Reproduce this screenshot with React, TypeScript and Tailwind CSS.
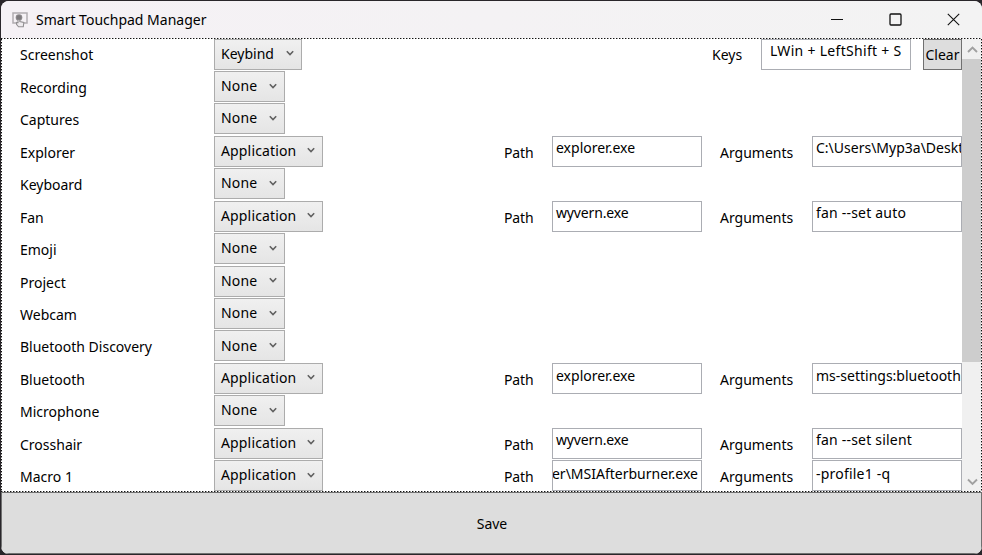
import React from "react";

type Row = { name: string; kind: "Keybind" | "None" | "Application"; path?: string; args?: string; end?: boolean };

const rows: Row[] = [
  { name: "Screenshot", kind: "Keybind" },
  { name: "Recording", kind: "None" },
  { name: "Captures", kind: "None" },
  { name: "Explorer", kind: "Application", path: "explorer.exe", args: "C:\\Users\\Myp3a\\Deskt" },
  { name: "Keyboard", kind: "None" },
  { name: "Fan", kind: "Application", path: "wyvern.exe", args: "fan --set auto" },
  { name: "Emoji", kind: "None" },
  { name: "Project", kind: "None" },
  { name: "Webcam", kind: "None" },
  { name: "Bluetooth Discovery", kind: "None" },
  { name: "Bluetooth", kind: "Application", path: "explorer.exe", args: "ms-settings:bluetooth" },
  { name: "Microphone", kind: "None" },
  { name: "Crosshair", kind: "Application", path: "wyvern.exe", args: "fan --set silent" },
  { name: "Macro 1", kind: "Application", path: "er\\MSIAfterburner.exe", args: "-profile1 -q", end: true },
];

const comboWidth = { Keybind: "w-[88px]", None: "w-[71px]", Application: "w-[109px]" };

function Combo({ kind }: { kind: Row["kind"] }) {
  return (
    <div className={`${comboWidth[kind]} flex h-[31px] items-center justify-between border border-[#acacac] bg-linear-to-b from-[#f0f0f0] to-[#e5e5e5] pr-[7px] pb-[1.8px] pl-[6px]`}>
      <span className={kind === "Keybind" ? "" : "tracking-[0.15px]"}>{kind}</span>
      <svg width="8" height="7" viewBox="0 0 8 7" className="mt-px shrink-0">
        <path d="M.8 1.3 L4 4.5 L7.2 1.3" fill="none" stroke="#606060" strokeWidth="1.6" />
      </svg>
    </div>
  );
}

function Field({ text, end, spacing, top }: { text: string; end?: boolean; spacing: string; top: string }) {
  return (
    <div className={`flex h-[31px] w-[150px] shrink-0 overflow-hidden border border-[#abadb3] bg-white ${top} ${end ? "justify-end pr-[3px]" : "pl-[3px]"}`}>
      <span className={`leading-[20px] ${spacing}`}>{text}</span>
    </div>
  );
}

function ActionRow({ row }: { row: Row }) {
  const label = row.kind === "Keybind" ? "pt-[6px]" : "pt-[7px]";
  const top = row.end ? "pt-[2.4px]" : row.name === "Bluetooth" ? "pt-[2px]" : "pt-px";
  const argSpacing = row.args?.startsWith("fan") || row.end ? "tracking-[0.2px]" : "";
  return (
    <div className="flex h-[32.45px] shrink-0 pl-[18px]">
      <span className={`w-[194px] shrink-0 leading-[20px] ${label}`}>{row.name}</span>
      <Combo kind={row.kind} />
      {row.kind === "Keybind" && (
        <div className="ml-auto flex">
          <span className="w-[49px] pt-[6px] leading-[20px]">Keys</span>
          <div className="h-[31px] w-[150px] border border-[#abadb3] pt-[1px] pl-[8px] leading-[20px] tracking-[0.3px]">LWin + LeftShift + S</div>
          <div className="ml-3 flex h-[31px] w-[39px] items-center justify-center border border-[#707070] bg-[#dddddd]">Clear</div>
        </div>
      )}
      {row.path && (
        <div className="ml-auto flex">
          <span className={`w-[48px] leading-[20px] tracking-[-0.1px] ${label}`}>Path</span>
          <Field text={row.path} end={row.end} top={top} spacing={row.path === "wyvern.exe" ? "tracking-[-0.15px]" : ""} />
          <span className={`ml-[18px] w-[92px] leading-[20px] ${label}`}>Arguments</span>
          <Field text={row.args ?? ""} top={top} spacing={argSpacing} />
        </div>
      )}
    </div>
  );
}

const dotsX = "h-px shrink-0 bg-[repeating-linear-gradient(90deg,#111_0_1px,#999_1px_2px,#fff_2px_3px)]";
const dotsY = "w-px shrink-0 bg-[repeating-linear-gradient(180deg,#111_0_1px,#999_1px_2px,#fff_2px_3px)]";

function Arrow({ d }: { d: string }) {
  return (
    <svg width="18" height="20" viewBox="0 0 18 20" className="shrink-0">
      <path d={d} fill="none" stroke="#a0a0a0" strokeWidth="1.9" />
    </svg>
  );
}

export default function App() {
  return (
    <div className="h-[555px] w-[982px] overflow-hidden bg-[#29262a] pt-px pl-px font-['Noto_Sans',sans-serif] text-[14px] whitespace-nowrap text-black">
      <div className="flex h-[553px] w-[981px] flex-col overflow-hidden rounded-[8px] bg-white">
        <header className="flex h-[37px] shrink-0 items-center bg-linear-to-r from-[#f5f1f5] to-[#f3f3f3]">
          <svg width="16" height="16" viewBox="0 0 16 16" className="ml-[11px] shrink-0">
            <path d="M4 11H1V1h14v10h-3" fill="none" stroke="#b0acb0" strokeWidth="1.5" />
            <circle cx="7" cy="5.6" r="3.3" fill="#8e8b8e" />
            <path d="M6 5.5v5.2L4.5 10.5v1.8l2 2.5h4.8l.5-4.3-4-1v-4z" fill="#eeebee" stroke="#929092" strokeWidth="1.1" />
            <circle cx="7" cy="5.6" r="2.4" fill="#7d7a7d" />
          </svg>
          <span className="ml-[8px]">Smart Touchpad Manager</span>
          <div className="mr-[22px] ml-auto flex items-center gap-[45px] pb-px">
            <svg width="14" height="14" viewBox="0 0 14 14"><path d="M1 7.5h12" stroke="#111" /></svg>
            <svg width="13" height="13" viewBox="0 0 13 13"><rect x="1" y="1" width="11" height="11" rx="1" fill="none" stroke="#111" strokeWidth="1.3" /></svg>
            <svg width="13" height="13" viewBox="0 0 13 13"><path d="M.8.8l11.4 11.4M12.2.8L.8 12.2" stroke="#111" strokeWidth="1.1" /></svg>
          </div>
        </header>
        <div className={dotsX} />
        <main className="flex h-[452px] shrink-0">
          <div className={dotsY} />
          <div className="-mt-[0.49px] flex h-[452.49px] w-[960px] shrink-0 flex-col overflow-hidden">
            {rows.map((row) => <ActionRow key={row.name} row={row} />)}
          </div>
          <div className="flex w-[19px] shrink-0 flex-col bg-[#f0f0f0]">
            <Arrow d="M6 13L10.5 8.5L15 13" />
            <div className="h-[303px] bg-[#cdcdcd]" />
            <div className="flex-1" />
            <Arrow d="M6 8.5L10.5 13L15 8.5" />
          </div>
          <div className={dotsY} />
        </main>
        <div className={dotsX} />
        <button className="flex flex-1 items-center justify-center border border-[#707070] bg-[#dddddd] pt-px pl-px">Save</button>
      </div>
    </div>
  );
}
